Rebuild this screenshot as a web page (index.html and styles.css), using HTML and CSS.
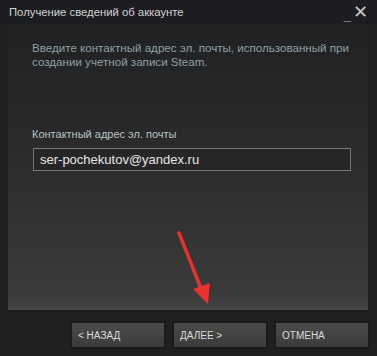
FILE: index.html
```html
<!DOCTYPE html>
<html lang="ru">
  <head>
    <meta charset="UTF-8" />
    <title>Получение сведений об аккаунте</title>
    <link rel="stylesheet" href="styles.css">
  </head>
  <body>
    <header class="titlebar">
      <span class="title">Получение сведений об аккаунте</span>
      <span class="win-controls">
        <span class="min">_</span>
        <span class="close">✕</span>
      </span>
    </header>

    <main class="panel">
      <p class="intro">
        Введите контактный адрес эл. почты, использованный при создании учетной записи Steam.
      </p>
      <label class="field-label" for="email">Контактный адрес эл. почты</label>
      <input class="field" type="text" id="email" value="ser-pochekutov@yandex.ru" />

      <!-- стрелка-подсказка поверх панели -->
      <svg class="arrow" width="40" height="80" viewBox="0 0 40 80">
        <line x1="3" y1="2" x2="26" y2="60" stroke="#e8322b" stroke-width="3.5" stroke-linecap="round" />
        <polygon points="17,58 34,52 32,73" fill="#e8322b" />
      </svg>
    </main>

    <footer class="buttons">
      <button class="btn" type="button">&lt; НАЗАД</button>
      <button class="btn" type="button">ДАЛЕЕ &gt;</button>
      <button class="btn" type="button">ОТМЕНА</button>
    </footer>
  </body>
</html>
```

FILE: styles.css
```css
body {
  margin: 0;
  width: 377px;
  height: 356px;
  background-color: #202022;
  font-family: "Liberation Sans", Arial, sans-serif;
  overflow: hidden;
}

.titlebar {
  display: flex;
  justify-content: space-between;
  align-items: center;
  height: 24px;
  padding: 0 9px;
  background-color: #1c1d20;
}

.title {
  color: #d2d2d2;
  font-size: 11.3px;
}

.win-controls {
  display: flex;
  align-items: flex-end;
  gap: 2px;
  color: #c8c8c8;
}

.min {
  font-size: 13px;
  color: #8a8a8a;
  line-height: 12px;
}

.close {
  font-size: 18px;
  line-height: 18px;
  font-weight: 300;
}

.panel {
  position: relative;
  box-sizing: border-box;
  margin: 0 9px 0 8px;
  height: 286px;
  padding: 17px 6px 0 24px;
  background: linear-gradient(to bottom, #202123 0%, #2b2b2c 45%, #3a3a3b 95%, #424243 100%);
  border-bottom: 3px solid #474748;
}

.intro {
  margin: 0;
  color: #8fa0a5;
  font-size: 11.6px;
  line-height: 14px;
  width: 328px;
}

.field-label {
  display: block;
  margin-top: 59px;
  color: #b8c4c6;
  font-size: 11px;
}

.field {
  display: block;
  box-sizing: border-box;
  width: 318px;
  height: 23px;
  margin: 8px 0 0 1px;
  padding: 0 6px;
  background-color: #262627;
  border: 1px solid #767676;
  color: #e6e6e6;
  font-family: "Liberation Sans", Arial, sans-serif;
  font-size: 13px;
}

.arrow {
  position: absolute;
  left: 168px;
  top: 207px;
}

.buttons {
  display: flex;
  justify-content: flex-end;
  gap: 10px;
  padding: 13px 9px 0 0;
}

.btn {
  box-sizing: border-box;
  width: 92px;
  height: 24px;
  padding: 0 6px;
  text-align: left;
  background: linear-gradient(to bottom, #4b4b4c, #3b3b3c);
  border: none;
  outline: 2px solid #1a1a1a;
  color: #dcdcdc;
  font-family: "Liberation Sans", Arial, sans-serif;
  font-size: 10px;
}
```
